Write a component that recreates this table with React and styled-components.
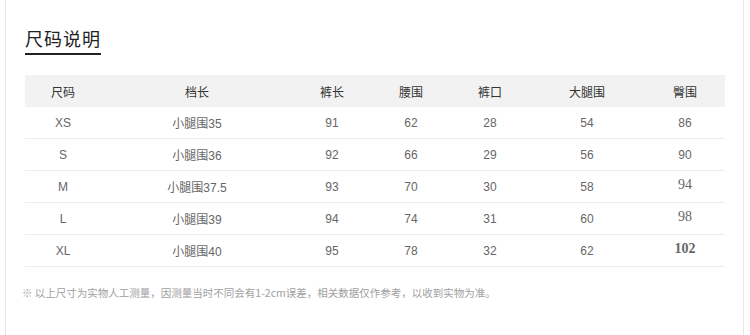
import React from 'react';
import styled, { createGlobalStyle } from 'styled-components';

const GlobalStyle = createGlobalStyle`
  body {
    margin: 0;
    background: #fff;
    font-family: "Liberation Sans", "Noto Sans CJK SC", sans-serif;
  }
`;

const Page = styled.div`
  margin-left: 5px;
  width: 739px;
  height: 335px;
  border-left: 1px solid #e6e6e6;
  border-right: 1px solid #e6e6e6;
  box-sizing: border-box;
  padding: 29px 0 0 19px;
`;

const Title = styled.h2`
  display: inline-block;
  margin: 0;
  font-size: 18px;
  line-height: 23px;
  font-weight: normal;
  color: #222;
  letter-spacing: 1px;
  padding-bottom: 1px;
  border-bottom: 2px solid #222;
`;

const Table = styled.div`
  margin-top: 20px;
  width: 700px;
  display: grid;
  grid-template-columns: 76px 192px 78px 80px 78px 116px 80px;
`;

const Cell = styled.div`
  height: 32px;
  box-sizing: border-box;
  display: flex;
  align-items: center;
  justify-content: center;
  font-size: 12px;
  color: ${({ $head }) => ($head ? '#333' : '#666')};
  background: ${({ $head }) => ($head ? '#f2f2f2' : 'transparent')};
  border-bottom: ${({ $head }) => ($head ? 'none' : '1px solid #ececec')};
  font-family: ${({ $serif }) =>
    $serif ? '"Liberation Serif", serif' : 'inherit'};
  font-weight: ${({ $bold }) => ($bold ? 'bold' : 'normal')};
  ${({ $serif }) => $serif && 'font-size: 14px; padding-bottom: 4px;'}
`;

const Note = styled.p`
  margin: 18px 0 0 -3px;
  font-size: 10.5px;
  color: #a0a0a0;
  font-family: "Noto Sans CJK SC", sans-serif;
`;

const heads = ['尺码', '档长', '裤长', '腰围', '裤口', '大腿围', '臀围'];

const rows = [
  ['XS', '小腿围35', '91', '62', '28', '54', '86'],
  ['S', '小腿围36', '92', '66', '29', '56', '90'],
  ['M', '小腿围37.5', '93', '70', '30', '58', '94'],
  ['L', '小腿围39', '94', '74', '31', '60', '98'],
  ['XL', '小腿围40', '95', '78', '32', '62', '102'],
];

export default function App() {
  return (
    <>
      <GlobalStyle />
      <Page>
        <Title>尺码说明</Title>
        <Table>
          {heads.map((h) => (
            <Cell key={h} $head>
              {h}
            </Cell>
          ))}
          {rows.map((r, i) =>
            r.map((v, j) => (
              <Cell
                key={`${i}-${j}`}
                $serif={j === 6 && i >= 2}
                $bold={j === 6 && i === 4}
              >
                {v}
              </Cell>
            ))
          )}
        </Table>
        <Note>※ 以上尺寸为实物人工测量，因测量当时不同会有1-2cm误差，相关数据仅作参考，以收到实物为准。</Note>
      </Page>
    </>
  );
}
